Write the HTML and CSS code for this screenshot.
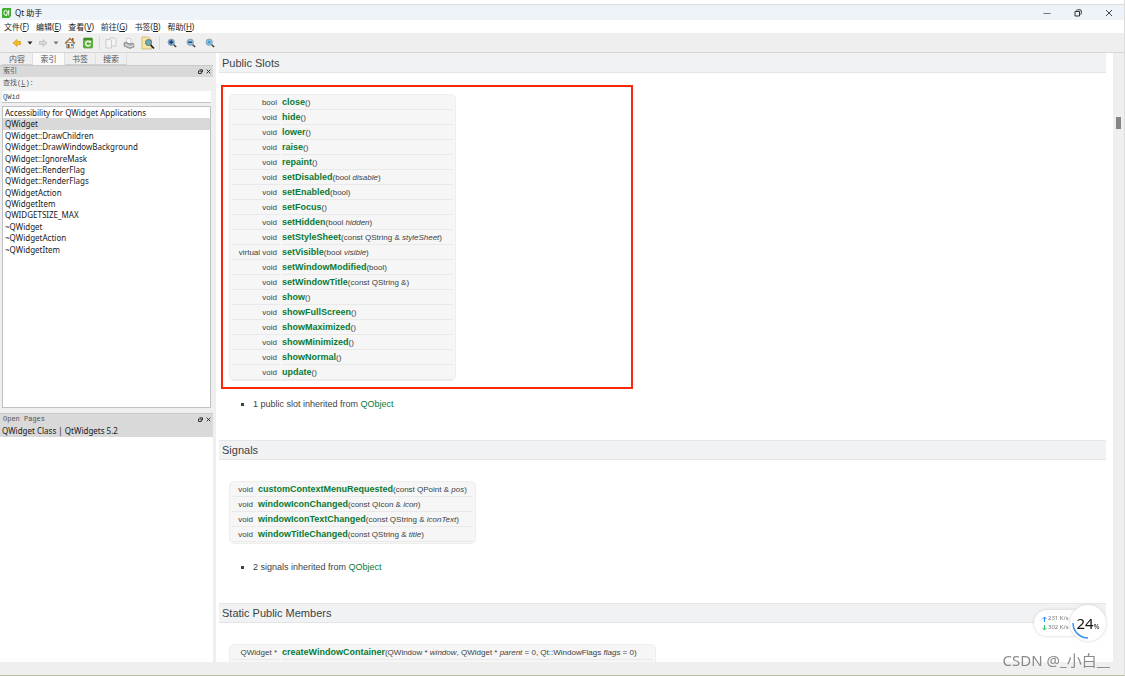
FILE: index.html
```html
<!DOCTYPE html>
<html lang="zh-CN">
<head>
<meta charset="utf-8">
<title>Qt 助手</title>
<link rel="stylesheet" href="styles.css">
</head>
<body>
<div class="window">
  <header class="titlebar">
    <svg class="logo" width="9" height="10" viewBox="0 0 9 10"><path d="M1 0h8v8L7 10H0V1z" fill="#3fae2a"/><ellipse cx="3.600" cy="4.800" rx="1.700" ry="2.500" fill="none" stroke="#fff" stroke-width="1"/><path d="M4 6.500l1 1.500M6.600 2v5.500M5.800 4h1.800" stroke="#fff" stroke-width=".9"/></svg>
    <span class="title">Qt 助手</span>
    <div class="controls">
      <button aria-label="Minimize"><svg width="8" height="8" viewBox="0 0 8 8"><path d="M.5 4.500h7" stroke="#777"/></svg></button>
      <button aria-label="Restore"><svg width="8" height="8" viewBox="0 0 8 8" fill="none" stroke="#333"><path d="M1 2.500h4.500V7H1z"/><path d="M2.500 1.500Q2.500.8 3.500.8h2.500Q7.300.8 7.300 2v2.500Q7.300 5.500 6.500 5.500"/></svg></button>
      <button aria-label="Close"><svg width="8" height="8" viewBox="0 0 8 8"><path d="M1 1l6 6M7 1L1 7" stroke="#333" stroke-width=".9"/></svg></button>
    </div>
  </header>

  <nav class="menubar">
    <button>文件(<u>F</u>)</button><button>编辑(<u>E</u>)</button><button>查看(<u>V</u>)</button><button>前往(<u>G</u>)</button><button>书签(<u>B</u>)</button><button>帮助(<u>H</u>)</button>
  </nav>

  <div class="toolbar">
    <button class="tool narrow" aria-label="Back"><svg width="10" height="10" viewBox="0 0 10 10"><path d="M1 5l4-3.500v2h3.500v3H5v2z" fill="#f5bd2c" stroke="#d99a22" stroke-width=".8"/></svg></button>
    <button class="drop" aria-label="Back history"><svg width="6" height="4" viewBox="0 0 6 4"><path d="M.5.5h5L3 3.500z" fill="#222"/></svg></button>
    <button class="tool narrow" aria-label="Forward"><svg width="10" height="10" viewBox="0 0 10 10"><path d="M9 5L5 1.500v2H1.500v3H5v2z" fill="#d8d8d8" stroke="#bdbdbd" stroke-width=".8"/></svg></button>
    <button class="drop" aria-label="Forward history"><svg width="6" height="4" viewBox="0 0 6 4"><path d="M.5.5h5L3 3.500z" fill="#777"/></svg></button>
    <button class="tool" aria-label="Home"><svg width="12" height="12" viewBox="0 0 12 12"><path d="M2.500 5.500h7V11h-7z" fill="#f0eadb" stroke="#7c7468" stroke-width=".6"/><path d="M8 1h1.500v3H8z" fill="#8a5a3a"/><path d="M1 6.500l5-5 5 5" fill="none" stroke="#a87638" stroke-width="1.500"/><path d="M3.500 7h2v4h-2z" fill="#825c34"/><path d="M7 7h2v2H7z" fill="#4a8fc0"/></svg></button>
    <button class="tool" aria-label="Sync"><svg width="10" height="12" viewBox="0 0 10 12"><rect x=".5" y="1" width="9" height="10" rx="1" fill="#5db53a" stroke="#479a2b" stroke-width=".7"/><path d="M.8 2h8.400" stroke="#2e651e"/><path d="M7 5.200A2.400 2.400 0 1 0 7.300 7.500" fill="none" stroke="#fff" stroke-width="1.300"/><path d="M5.500 5.800h2.500V3.500z" fill="#fff"/></svg></button>
    <span class="divider"></span>
    <button class="tool" aria-label="Copy"><svg width="12" height="12" viewBox="0 0 12 12" fill="#f4f4f4" stroke="#c3c3c3" stroke-width=".8"><path d="M5 1h4.500L11 2.500V9H5z"/><path d="M1 2.500h4L6.500 4v7H1z"/></svg></button>
    <button class="tool" aria-label="Print"><svg width="12" height="12" viewBox="0 0 12 12"><path d="M3 6l1-5 4 1-.5 5z" fill="#fff" stroke="#aaa" stroke-width=".5"/><path d="M1 6l2-1 4 2 3-1 1 2v2L7 11.500 1 9z" fill="#aaa" stroke="#777" stroke-width=".6"/><path d="M2 7.500l5 2 3.500-1" fill="none" stroke="#eee"/></svg></button>
    <button class="tool wide" aria-label="Find in text"><svg width="14" height="14" viewBox="0 0 14 14"><path d="M1 1h6.500l3 3v9H1z" fill="#f7e5a6" stroke="#cbb168" stroke-width=".8"/><circle cx="7.500" cy="6.500" r="3" fill="#6cabb7" stroke="#5c757a"/><path d="M9.700 9l3.300 3.500" stroke="#222" stroke-width="1.800"/></svg></button>
    <span class="divider"></span>
    <button class="tool wide" aria-label="Zoom in"><svg width="10" height="10" viewBox="0 0 10 10"><circle cx="4.200" cy="4.200" r="3.200" fill="#6fa6d4" stroke="#8b9aa7" stroke-width=".8"/><path d="M6.700 6.700L9.200 9" stroke="#443f3a" stroke-width="1.500"/><path d="M2.200 4.200h4M4.200 2.200v4" stroke="#123b70" stroke-width="1.300"/></svg></button>
    <button class="tool wide" aria-label="Zoom out"><svg width="10" height="10" viewBox="0 0 10 10"><circle cx="4.200" cy="4.200" r="3.200" fill="#8dbde1" stroke="#8b9aa7" stroke-width=".8"/><path d="M6.700 6.700L9.200 9" stroke="#443f3a" stroke-width="1.500"/><path d="M2.200 4.200h4" stroke="#123b70" stroke-width="1.300"/></svg></button>
    <button class="tool wide" aria-label="Reset zoom"><svg width="10" height="10" viewBox="0 0 10 10"><circle cx="4.200" cy="4.200" r="3.200" fill="#8dc5e6" stroke="#8b9aa7" stroke-width=".8"/><path d="M6.700 6.700L9.200 9" stroke="#443f3a" stroke-width="1.500"/><path d="M2.800 2.800h2.800v2.800H2.800z" fill="#4d9ed0"/></svg></button>
  </div>

  <div class="body">
    <aside class="side">
      <div class="tabs" role="tablist">
        <button role="tab">内容</button><button role="tab" class="on" aria-selected="true">索引</button><button role="tab">书签</button><button role="tab">搜索</button>
      </div>
      <section class="dock index">
        <div class="dock-head"><span>索引</span>
          <button aria-label="Float"><svg width="5" height="5" viewBox="0 0 5 5"><path d="M1.500.8h3v2.400M.5 2h2.800v2.500H.5z" fill="none" stroke="#222" stroke-width=".9"/></svg></button>
          <button aria-label="Close panel"><svg width="5" height="5" viewBox="0 0 5 5"><path d="M.7.7l3.600 3.600M4.300.7L.7 4.300" stroke="#222" stroke-width=".9"/></svg></button>
        </div>
        <label class="look" for="look">查找(<u>L</u>):</label>
        <input class="look-input" id="look" type="text" value="QWid">
        <ul class="list">
          <li>Accessibility for QWidget Applications</li>
          <li class="sel">QWidget</li>
          <li>QWidget::DrawChildren</li>
          <li>QWidget::DrawWindowBackground</li>
          <li>QWidget::IgnoreMask</li>
          <li>QWidget::RenderFlag</li>
          <li>QWidget::RenderFlags</li>
          <li>QWidgetAction</li>
          <li>QWidgetItem</li>
          <li>QWIDGETSIZE_MAX</li>
          <li>~QWidget</li>
          <li>~QWidgetAction</li>
          <li>~QWidgetItem</li>
        </ul>
      </section>
      <section class="dock pages">
        <div class="dock-head"><span>Open Pages</span>
          <button aria-label="Float"><svg width="5" height="5" viewBox="0 0 5 5"><path d="M1.500.8h3v2.400M.5 2h2.800v2.500H.5z" fill="none" stroke="#222" stroke-width=".9"/></svg></button>
          <button aria-label="Close panel"><svg width="5" height="5" viewBox="0 0 5 5"><path d="M.7.7l3.600 3.600M4.300.7L.7 4.300" stroke="#222" stroke-width=".9"/></svg></button>
        </div>
        <ul class="open"><li class="sel">QWidget Class | QtWidgets 5.2</li></ul>
      </section>
    </aside>

    <main class="doc">
      <section>
        <h2 class="first">Public Slots</h2>
        <div class="marked">
          <table class="members slots">
            <tr><td>bool</td><td><a href="#">close</a>()</td></tr>
            <tr><td>void</td><td><a href="#">hide</a>()</td></tr>
            <tr><td>void</td><td><a href="#">lower</a>()</td></tr>
            <tr><td>void</td><td><a href="#">raise</a>()</td></tr>
            <tr><td>void</td><td><a href="#">repaint</a>()</td></tr>
            <tr><td>void</td><td><a href="#">setDisabled</a>(bool <i>disable</i>)</td></tr>
            <tr><td>void</td><td><a href="#">setEnabled</a>(bool)</td></tr>
            <tr><td>void</td><td><a href="#">setFocus</a>()</td></tr>
            <tr><td>void</td><td><a href="#">setHidden</a>(bool <i>hidden</i>)</td></tr>
            <tr><td>void</td><td><a href="#">setStyleSheet</a>(const QString &amp; <i>styleSheet</i>)</td></tr>
            <tr><td>virtual void</td><td><a href="#">setVisible</a>(bool <i>visible</i>)</td></tr>
            <tr><td>void</td><td><a href="#">setWindowModified</a>(bool)</td></tr>
            <tr><td>void</td><td><a href="#">setWindowTitle</a>(const QString &amp;)</td></tr>
            <tr><td>void</td><td><a href="#">show</a>()</td></tr>
            <tr><td>void</td><td><a href="#">showFullScreen</a>()</td></tr>
            <tr><td>void</td><td><a href="#">showMaximized</a>()</td></tr>
            <tr><td>void</td><td><a href="#">showMinimized</a>()</td></tr>
            <tr><td>void</td><td><a href="#">showNormal</a>()</td></tr>
            <tr><td>void</td><td><a href="#">update</a>()</td></tr>
          </table>
        </div>
        <ul class="inherited"><li>1 public slot inherited from <a href="#">QObject</a></li></ul>
      </section>
      <section>
        <h2>Signals</h2>
        <table class="members signals">
          <tr><td>void</td><td><a href="#">customContextMenuRequested</a>(const QPoint &amp; <i>pos</i>)</td></tr>
          <tr><td>void</td><td><a href="#">windowIconChanged</a>(const QIcon &amp; <i>icon</i>)</td></tr>
          <tr><td>void</td><td><a href="#">windowIconTextChanged</a>(const QString &amp; <i>iconText</i>)</td></tr>
          <tr><td>void</td><td><a href="#">windowTitleChanged</a>(const QString &amp; <i>title</i>)</td></tr>
        </table>
        <ul class="inherited after"><li>2 signals inherited from <a href="#">QObject</a></li></ul>
      </section>
      <section>
        <h2>Static Public Members</h2>
        <table class="members statics">
          <tr><td>QWidget *</td><td><a href="#">createWindowContainer</a>(QWindow * <i>window</i>, QWidget * <i>parent</i> = 0, Qt::WindowFlags <i>flags</i> = 0)</td></tr>
        </table>
      </section>
    </main>
    <div class="scroll"><div class="thumb"></div></div>
  </div>
  <footer class="status"></footer>
</div>

<div class="monitor">
  <div class="rates">
    <div><svg width="5" height="6" viewBox="0 0 5 6"><path d="M2.500 6V1M.5 3l2-2 2 2" fill="none" stroke="#2f86f6"/></svg>231 K/s</div>
    <div><svg width="5" height="6" viewBox="0 0 5 6"><path d="M2.500 0v5M.5 3l2 2 2-2" fill="none" stroke="#35c46a"/></svg>302 K/s</div>
  </div>
  <div class="gauge">
    <svg class="arc" width="36" height="36" viewBox="0 0 36 36"><path d="M3 18a15 15 0 0 0 15 15" fill="none" stroke="#3a92f7" stroke-width="1.500"/></svg>
    <span>24</span><small>%</small>
  </div>
</div>
<div class="watermark">CSDN @_小白__</div>
</body>
</html>
```
FILE: styles.css
```css
* { box-sizing: border-box; }
body {
  margin: 0;
  background: #fff;
  color: #1a1a1a;
  font: 8px/12px "Noto Sans", "Noto Sans CJK SC", sans-serif;
}
button { border: 0; padding: 0; margin: 0; background: none; font: inherit; color: inherit; }
svg { display: block; }
ul { list-style: none; margin: 0; padding: 0; }
a { color: #0a7a35; text-decoration: none; }

.window {
  display: flex;
  flex-direction: column;
  height: 100vh;
  padding-top: 4px;
  border-right: 1px solid #ddd;
  border-bottom: 1px solid #b9bda5;
}

.titlebar {
  display: flex;
  align-items: center;
  height: 16px;
  flex: none;
  gap: 4px;
  padding-left: 2px;
  background: #edf3f9;
  border-top: 1px solid #dcdcdc;
}
.controls { display: flex; margin-left: auto; }
.controls button { width: 31px; display: grid; place-items: center; }

.menubar { display: flex; flex: none; height: 13px; padding-left: 4px; gap: 7px; background: #fff; }

.toolbar {
  display: flex;
  align-items: center;
  flex: none;
  height: 20px;
  padding-left: 9px;
  background: #efefef;
  border-bottom: 1px solid #d6d6d6;
}
.tool, .drop { display: grid; place-items: center; height: 16px; }
.tool { width: 18px; }
.tool.narrow { width: 15px; }
.tool.wide { width: 19px; }
.drop { width: 11px; }
.divider { width: 1px; height: 14px; margin: 0 2px; background: #d9d9d9; }

.body { display: flex; flex: 1; min-height: 0; background: #efefef; }
.side { display: flex; flex-direction: column; flex: none; width: 213px; margin-right: 3px; }

.tabs { display: flex; flex: none; height: 12px; padding-left: 2px; color: #555; }
.tabs button { width: 31px; border-right: 1px solid #e0e0e0; border-bottom: 1px solid #d0d0d0; line-height: 11px; }
.tabs .on { background: #fafafa; border-bottom-color: #fafafa; width: 32px; }

.dock { display: flex; flex-direction: column; }
.dock.index { flex: none; height: 348px; }
.dock.pages { flex: 1; background: #fff; }
.dock-head {
  display: flex;
  align-items: center;
  flex: none;
  gap: 3px;
  height: 12px;
  padding: 0 2px 0 3px;
  background: #d9d9d9;
  border-top: 1px solid #cacaca;
  color: #555;
  font: 7px/11px "Liberation Mono", "Noto Sans CJK SC", monospace;
}
.dock-head span { flex: 1; }
.look {
  height: 14px;
  padding-left: 3px;
  color: #555;
  font: 7px/13px "Liberation Mono", "Noto Sans CJK SC", monospace;
}
.look-input {
  flex: none;
  height: 12px;
  margin: 0 2px 3px;
  padding: 0 1px;
  border: 0;
  border-bottom: 1px solid #c4c4c4;
  background: #fff;
  color: #444;
  font: 7px/11px "Liberation Mono", monospace;
}
.list {
  flex: 1;
  margin: 0 2px 5px;
  border: 1px solid #bfc1c3;
  background: #fff;
  display: grid;
  grid-template-rows: repeat(13, minmax(11px, 1fr));
  padding-bottom: 152px;
}
.list li { padding-left: 2px; line-height: 11px; }
.sel { background: #d9d9d9; }
.open li { padding-left: 2px; }

.doc {
  flex: 1;
  min-width: 0;
  overflow: hidden;
  padding: 0 7px 0 3px;
  background: #fff;
  color: #404244;
  font-family: "Liberation Sans", Arial, sans-serif;
}
.doc h2 {
  height: 20px;
  margin: 0;
  padding-left: 3px;
  background: #f0f2f4;
  border-top: 1px solid #e4e6e8;
  border-bottom: 1px solid #e2e4e6;
  font-size: 11px;
  line-height: 18px;
  font-weight: normal;
}
.doc h2.first { border-top-color: #f0f2f4; }

.marked {
  width: 412px;
  max-width: 100%;
  margin: 12px 0 0 2px;
  padding: 7px 6px 6px;
  border: 2px solid #f9280c;
}
.members {
  margin: 21px 0 0 10px;
  border: 1px solid #eee;
  border-radius: 5px;
  background: #f6f6f6;
  border-collapse: separate;
  border-spacing: 2px 0;
  font-size: 8px;
}
.marked .members { margin: 0; }
.members td { height: 15px; padding: 1px 0 0; line-height: 13px; border-bottom: 1px solid #e9e9e9; white-space: nowrap; }
.members td:first-child { width: 48px; padding-right: 3px; text-align: right; }
.members a { font-size: 9px; font-weight: bold; }
.slots { width: 227px; }
.signals { width: 247px; padding-bottom: 1px; }
.members.signals td:first-child { width: 24px; }
.statics { width: 427px; padding-bottom: 12px; }

.inherited { margin: 8px 0 29px; padding-left: 34px; font-size: 9px; line-height: 14px; list-style: square; }
.inherited.after { margin-top: 16px; }

.scroll { flex: none; width: 11px; padding: 64px 3px 0; background: #efefef; }
.thumb { height: 12px; width: 5px; background: #858585; }
.status { flex: none; height: 13px; background: #efefef; }

.monitor {
  position: fixed;
  right: 19px;
  bottom: 35px;
  display: flex;
  align-items: center;
}
.rates {
  width: 54px;
  height: 26px;
  margin-right: -18px;
  padding: 4px 0 0 8px;
  border-radius: 13px;
  background: #fff;
  box-shadow: 0 0 3px #ccc;
  color: #777;
  font-size: 6px;
  line-height: 9px;
}
.rates div { display: flex; align-items: center; gap: 1px; white-space: nowrap; }
.gauge {
  position: relative;
  display: flex;
  align-items: baseline;
  justify-content: center;
  width: 36px;
  height: 36px;
  border-radius: 50%;
  background: #fff;
  box-shadow: 0 0 3px #ccc;
  color: #111;
  font-size: 15px;
  line-height: 36px;
}
.gauge small { font-size: 7px; }
.arc { position: absolute; inset: 0; }
.watermark {
  position: fixed;
  right: 15px;
  bottom: 7px;
  color: #8a8a8a;
  font: 15px/18px "Noto Sans", "Noto Sans CJK SC", sans-serif;
}
```
